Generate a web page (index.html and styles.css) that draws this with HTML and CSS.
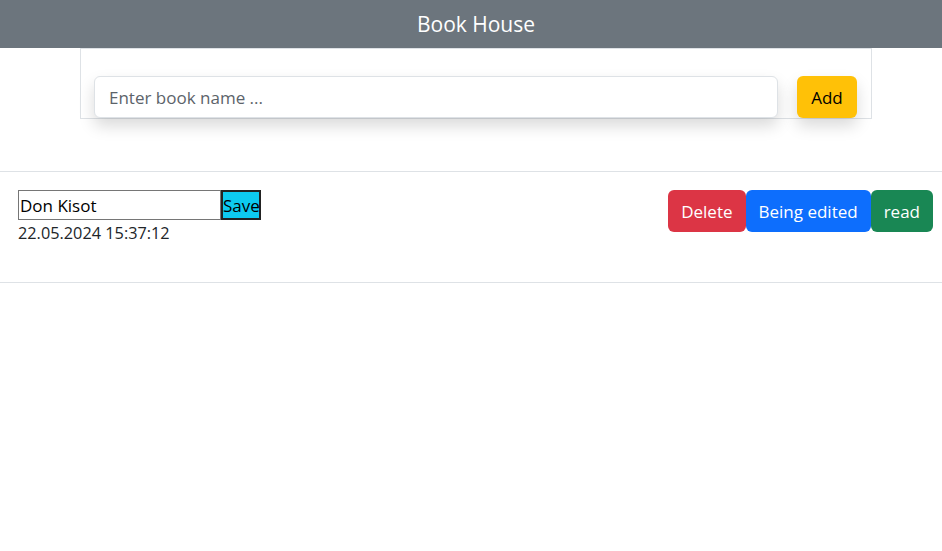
FILE: index.html
```html
<!DOCTYPE html>
<html>
<head>
<meta charset="utf-8">
<link rel="stylesheet" href="styles.css">
</head>
<body>
<header class="topbar">Book House</header>
<div class="form-wrap">
  <form class="add-form">
    <input class="book-input" type="text" placeholder="Enter book name ...">
    <button type="button" class="btn btn-warning">Add</button>
  </form>
</div>
<ul class="book-list">
  <li class="book-item">
    <div class="book-info">
      <div class="edit-line"><input class="edit-input" type="text" value="Don Kisot"><button type="button" class="save-btn">Save</button></div>
      <div class="book-date">22.05.2024 15:37:12</div>
    </div>
    <div class="actions">
      <button type="button" class="btn btn-danger">Delete</button>
      <button type="button" class="btn btn-primary">Being edited</button>
      <button type="button" class="btn btn-success">read</button>
    </div>
  </li>
</ul>
</body>
</html>
```
FILE: styles.css
```css
* { box-sizing: border-box; }
body {
  margin: 0;
  font-family: "Segoe UI", "Open Sans", "Noto Sans", sans-serif;
  color: #212529;
  background: #fff;
}
.topbar {
  height: 48px;
  background: #6c757d;
  color: #fff;
  font-size: 21px;
  display: flex;
  align-items: center;
  justify-content: center;
  padding: 0 0 1px 10px;
}
.form-wrap {
  width: 792px;
  margin: 0 0 0 80px;
  border: 1px solid #dee2e6;
  height: 71px;
  display: flex;
  align-items: flex-end;
}
.add-form {
  display: flex;
  align-items: flex-end;
  gap: 19px;
  padding: 0 14px 0 13px;
  width: 100%;
  margin-bottom: 0;
}
.book-input {
  flex: 1;
  height: 42px;
  border: 1px solid #dee2e6;
  border-radius: 6px;
  padding: 0 14px;
  font: inherit;
  font-size: 17px;
  color: #212529;
  box-shadow: 0 8px 16px rgba(0,0,0,.15);
  outline: none;
}
.book-input::placeholder { color: #5c636a; }
.btn {
  font: inherit;
  font-size: 17px;
  border: 1px solid transparent;
  border-radius: 6px;
  height: 42px;
  padding: 0 12px;
  color: #fff;
  cursor: pointer;
  line-height: 1;
}
.btn-warning {
  background: #ffc107;
  color: #000;
  width: 60px;
  padding: 0;
  box-shadow: 0 8px 16px rgba(0,0,0,.15);
}
.btn-danger { background: #dc3545; }
.btn-primary { background: #0d6efd; }
.btn-success { background: #198754; }
.book-list {
  list-style: none;
  margin: 52px 0 0;
  padding: 0;
}
.book-item {
  border-top: 1px solid #dee2e6;
  border-bottom: 1px solid #dee2e6;
  height: 112px;
  display: flex;
  justify-content: space-between;
  align-items: flex-start;
  padding: 18px 9px 0 18px;
}
.edit-line { display: flex; }
.edit-input {
  width: 203px;
  height: 30px;
  border: 1px solid #767676;
  border-radius: 0;
  font: inherit;
  font-size: 17px;
  color: #000;
  padding: 0 1px;
  outline: none;
}
.save-btn {
  height: 30px;
  background: #0dcaf0;
  border: 2px solid #222;
  font: inherit;
  font-size: 17px;
  color: #000;
  padding: 0;
  width: 40px;
  line-height: 1;
}
.book-date {
  font-size: 16.3px;
  margin-top: 1px;
  line-height: 24px;
}
.actions { display: flex; }
```
